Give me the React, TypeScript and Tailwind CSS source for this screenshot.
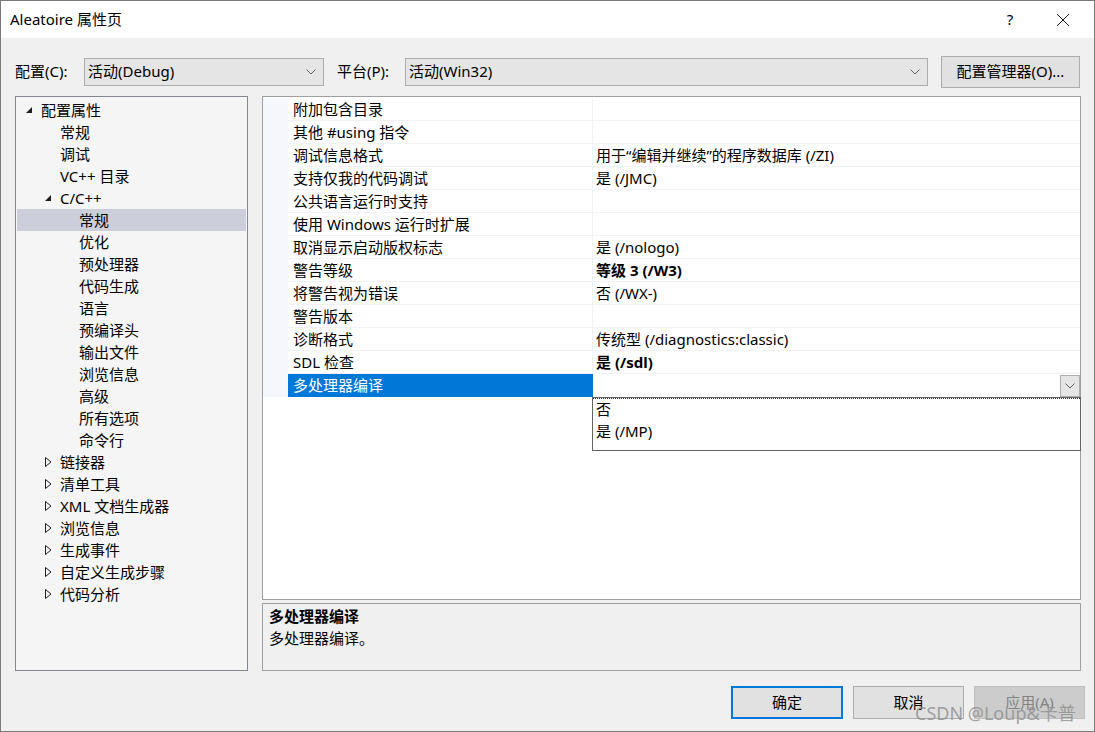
import { useState } from 'react';

const FONT = '"Noto Sans", "Noto Sans CJK SC", sans-serif';

type TreeItem = { label: string; level: number; toggle?: 'open' | 'closed'; selected?: boolean };

const treeItems: TreeItem[] = [
  { label: '配置属性', level: 0, toggle: 'open' },
  { label: '常规', level: 1 },
  { label: '调试', level: 1 },
  { label: 'VC++ 目录', level: 1 },
  { label: 'C/C++', level: 1, toggle: 'open' },
  { label: '常规', level: 2, selected: true },
  { label: '优化', level: 2 },
  { label: '预处理器', level: 2 },
  { label: '代码生成', level: 2 },
  { label: '语言', level: 2 },
  { label: '预编译头', level: 2 },
  { label: '输出文件', level: 2 },
  { label: '浏览信息', level: 2 },
  { label: '高级', level: 2 },
  { label: '所有选项', level: 2 },
  { label: '命令行', level: 2 },
  { label: '链接器', level: 1, toggle: 'closed' },
  { label: '清单工具', level: 1, toggle: 'closed' },
  { label: 'XML 文档生成器', level: 1, toggle: 'closed' },
  { label: '浏览信息', level: 1, toggle: 'closed' },
  { label: '生成事件', level: 1, toggle: 'closed' },
  { label: '自定义生成步骤', level: 1, toggle: 'closed' },
  { label: '代码分析', level: 1, toggle: 'closed' },
];

// 属性表格的行
const props: { name: string; value: string; bold?: boolean }[] = [
  { name: '附加包含目录', value: '' },
  { name: '其他 #using 指令', value: '' },
  { name: '调试信息格式', value: '用于“编辑并继续”的程序数据库 (/ZI)' },
  { name: '支持仅我的代码调试', value: '是 (/JMC)' },
  { name: '公共语言运行时支持', value: '' },
  { name: '使用 Windows 运行时扩展', value: '' },
  { name: '取消显示启动版权标志', value: '是 (/nologo)' },
  { name: '警告等级', value: '等级 3 (/W3)', bold: true },
  { name: '将警告视为错误', value: '否 (/WX-)' },
  { name: '警告版本', value: '' },
  { name: '诊断格式', value: '传统型 (/diagnostics:classic)' },
  { name: 'SDL 检查', value: '是 (/sdl)', bold: true },
];

const Chevron = ({ className = '' }: { className?: string }) => (
  <svg width="10" height="6" viewBox="0 0 10 6" className={className}>
    <path d="M0.5 0.5 L5 5 L9.5 0.5" fill="none" stroke="#606060" strokeWidth="1" />
  </svg>
);

const Toggle = ({ kind }: { kind: 'open' | 'closed' }) =>
  kind === 'open' ? (
    <svg width="8" height="8" viewBox="0 0 8 8">
      <path d="M7 1 L7 7 L1 7 Z" fill="#1e1e1e" />
    </svg>
  ) : (
    <svg width="7" height="10" viewBox="0 0 7 10">
      <path d="M0.5 0.5 L6 5 L0.5 9.5 Z" fill="none" stroke="#1e1e1e" strokeWidth="1" />
    </svg>
  );

function ComboBox({ text, width }: { text: string; width: string }) {
  return (
    <div className={`${width} h-[28px] bg-[#e5e5e5] border border-[#acacac] flex items-center pl-[3px] pr-[7px]`}>
      <span className="flex-1">{text}</span>
      <Chevron />
    </div>
  );
}

export default function App() {
  const [selected] = useState(12);

  return (
    <div
      className="relative w-[1095px] h-[732px] flex flex-col border border-[#7a7a7a] bg-[#f0f0f0] text-black text-[15px] overflow-hidden"
      style={{ fontFamily: FONT }}
    >
      {/* 标题栏 */}
      <div className="h-[37px] bg-white flex items-center pl-[9px] shrink-0">
        <span className="flex-1 text-[15px]">Aleatoire 属性页</span>
        <span className="w-[20px] text-center text-[15px] mr-[36px]">?</span>
        <svg width="14" height="14" viewBox="0 0 14 14" className="mr-[24px]">
          <path d="M1 1 L13 13 M13 1 L1 13" stroke="#111" strokeWidth="1" />
        </svg>
      </div>

      {/* 配置/平台 */}
      <div className="flex items-center h-[33px] mt-[17px] pl-[14px] pr-[14px]">
        <span className="w-[69px]">配置(C):</span>
        <ComboBox text="活动(Debug)" width="w-[240px]" />
        <span className="ml-[13px] w-[68px]">平台(P):</span>
        <ComboBox text="活动(Win32)" width="w-[523px]" />
        <button className="ml-[13px] w-[139px] h-[32px] bg-[#e1e1e1] border border-[#adadad]">
          配置管理器(O)...
        </button>
      </div>

      {/* 主区域 */}
      <div className="flex mt-[8px] pl-[14px] h-[575px]">
        {/* 树 */}
        <div className="w-[233px] h-full border border-[#828790] bg-[#f5f5f5] pt-[2px] px-[1px]">
          {treeItems.map((it, i) => (
            <div
              key={i}
              className={`h-[22px] flex items-center ${it.selected ? 'bg-[#cccedb]' : ''}`}
            >
              <div
                className={`flex items-center justify-center w-[12px] shrink-0 ${
                  it.level === 0 ? 'ml-[6px]' : it.level === 1 ? 'ml-[25px]' : 'ml-[44px]'
                }`}
              >
                {it.toggle && <Toggle kind={it.toggle} />}
              </div>
              <span className="ml-[6px] whitespace-nowrap">{it.label}</span>
            </div>
          ))}
        </div>

        {/* 右侧 */}
        <div className="ml-[14px] w-[819px] flex flex-col">
          <div className="relative h-[504px] border border-[#a0a0a0] bg-white pt-[1px]">
            {props.map((p, i) => (
              <div key={i} className="flex h-[23px]">
                <div className="w-[25px] bg-[#f5f7fc] shrink-0" />
                <div className="w-[305px] border-b border-r border-[#f0f2f7] pl-[5px] flex items-center whitespace-nowrap">
                  {p.name}
                </div>
                <div
                  className={`flex-1 border-b border-[#f0f2f7] pl-[3px] flex items-center whitespace-nowrap ${
                    p.bold ? 'font-bold' : ''
                  }`}
                >
                  {p.value}
                </div>
              </div>
            ))}
            {/* 选中行 */}
            <div className="flex h-[23px]">
              <div className="w-[25px] bg-[#f5f7fc] shrink-0" />
              <div
                className={`w-[305px] pl-[5px] flex items-center text-white whitespace-nowrap ${
                  selected === 12 ? 'bg-[#0078d7]' : ''
                }`}
              >
                多处理器编译
              </div>
              <div className="flex-1 flex items-center justify-end">
                <div className="w-[20px] h-[22px] bg-[#e5e5e5] border border-[#adadad] flex items-center justify-center">
                  <Chevron />
                </div>
              </div>
            </div>

            {/* 下拉列表 */}
            <div className="absolute left-[329px] top-[300px] w-[489px] h-[54px] border border-[#646464] bg-white">
              <div className="h-[22px] flex items-center pl-[3px] border-t border-dotted border-[#333]">否</div>
              <div className="h-[22px] flex items-center pl-[3px]">是 (/MP)</div>
            </div>
          </div>

          {/* 说明 */}
          <div className="mt-[3px] h-[68px] border border-[#a0a0a0] bg-[#f0f0f0] pl-[6px] pt-[1px]">
            <div className="font-bold h-[22px] flex items-center">多处理器编译</div>
            <div className="h-[22px] flex items-center">多处理器编译。</div>
          </div>
        </div>
      </div>

      {/* 按钮 */}
      <div className="flex justify-end gap-[10px] mt-[15px] pr-[9px]">
        <button className="w-[112px] h-[33px] bg-[#e1e1e1] border-2 border-[#0078d7]">确定</button>
        <button className="w-[111px] h-[33px] bg-[#e1e1e1] border border-[#adadad]">取消</button>
        <button className="w-[111px] h-[33px] bg-[#cccccc] border border-[#bfbfbf] text-[#838383]">应用(A)</button>
      </div>

      {/* 水印 */}
      <div className="absolute left-[914px] top-[699px] text-[18px] text-[#8c8c8c]/80 pointer-events-none whitespace-nowrap">
        CSDN @Loup&卡普
      </div>
    </div>
  );
}
